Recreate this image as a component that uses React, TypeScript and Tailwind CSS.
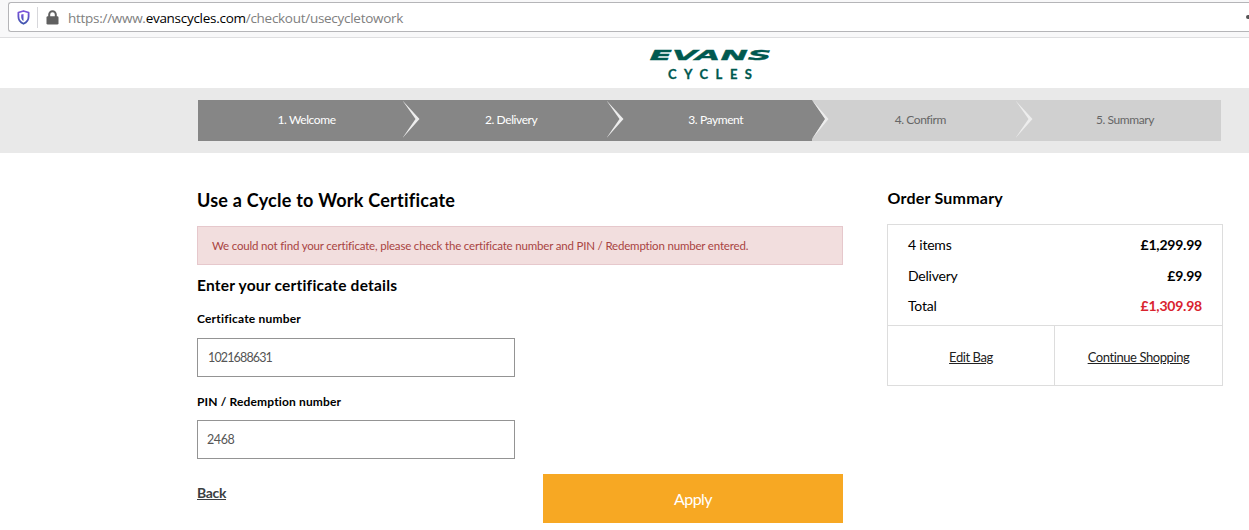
import type { ReactNode } from "react";

function Arrow({ fill }: { fill?: string }) {
  return (
    <svg className="block h-[41px] w-[18px] shrink-0" viewBox="0 0 18 41">
      {fill && <path d="M0 0L13.500 19L0 39Z" fill={fill} />}
      <path d={fill ? "M0 0L16.500 19L0 39L13 19Z" : "M-0.500 0.500L16.500 19L-0.500 38L12.500 19Z"} fill="#ededed" />
    </svg>
  );
}

function Step({ label, done, arrow, fill }: { label: string; done?: boolean; arrow?: boolean; fill?: string }) {
  return (
    <li
      className={
        done
          ? "flex h-[41px] flex-1 items-center bg-[#868686] text-white"
          : "flex h-[41px] flex-1 items-center bg-[#d0d0d0] text-[#666]"
      }
    >
      <div className="w-[18px] shrink-0">{arrow && <Arrow fill={fill} />}</div>
      <span className="flex-1 pr-[5.5px] pb-px text-center text-[12px] tracking-[-0.42px]">{label}</span>
    </li>
  );
}

function Row({ label, value }: { label: string; value: ReactNode }) {
  return (
    <div className="flex h-[30.5px] items-center justify-between text-[14px] tracking-[-0.22px] text-black">
      <span>{label}</span>
      {value}
    </div>
  );
}

export default function App() {
  return (
    <div className="h-[530px] w-[1249px] overflow-hidden bg-white font-[Lato,sans-serif] text-black">
      <header className="flex h-[38px] items-start border-b border-[#dedee0] bg-[#f8f8f9] pt-[2px] pl-2">
        <div className="flex h-[30px] flex-1 items-center rounded-l-[3px] border border-r-0 border-[#b5b5b8] bg-white">
          <svg className="ml-2 h-[15px] w-[13px]" viewBox="0 0 13 15">
            <defs>
              <linearGradient id="shield" x1="0" y1="0" x2="0" y2="1">
                <stop offset="0" stopColor="#7c52dc" />
                <stop offset="1" stopColor="#3f55ad" />
              </linearGradient>
            </defs>
            <path d="M6.5 1L11.6 2.5V6.5C11.6 10 9.7 12.4 6.5 13.8C3.300 12.400 1.400 10 1.400 6.500V2.500Z" fill="none" stroke="url(#shield)" strokeWidth="1.800" strokeLinejoin="round" />
            <path d="M6.500 4V11C4.900 10 4.200 8.500 4.200 6.500V4.600Z" fill="url(#shield)" />
          </svg>
          <span className="ml-[7px] h-[21px] w-px bg-[#d7d7db]" />
          <svg className="ml-2 h-[15px] w-[13px]" viewBox="0 0 13 15">
            <path d="M3.200 7V4.600a3.300 3.300 0 0 1 6.600 0V7" fill="none" stroke="#606060" strokeWidth="2" />
            <rect x="0.500" y="6.200" width="12" height="8.300" rx="1.300" fill="#606060" />
          </svg>
          <span className="ml-[9px] flex-1 pt-[2px] font-['Open_Sans',sans-serif] text-[13.5px] tracking-[-0.28px] whitespace-nowrap text-[#808080]">
            https://www.<span className="text-black">evanscycles.com</span>/checkout/usecycletowork
          </span>
          <span className="h-1 w-[3px] rounded-l-full bg-[#555]" />
        </div>
      </header>

      <div className="flex h-[50px] justify-center pl-[171px]">
        <svg className="h-[50px] w-[130px]" viewBox="0 0 130 50">
          <text x="4.500" y="22" textLength="122" lengthAdjust="spacingAndGlyphs" stroke="#00594f" strokeWidth="0.300" className="fill-[#00594f] font-['DejaVu_Sans',sans-serif] text-[14px] font-bold italic">EVANS</text>
          <text x="23" y="41" textLength="84" lengthAdjust="spacing" stroke="#00594f" strokeWidth="0.300" className="fill-[#00594f] font-[Lato,sans-serif] text-[13px] font-bold">CYCLES</text>
        </svg>
      </div>

      <nav className="h-[65px] bg-[#e9e9e9] pt-3 pr-7 pl-[198px]">
        <ol className="flex">
          <Step label="1. Welcome" done />
          <Step label="2. Delivery" done arrow />
          <Step label="3. Payment" done arrow />
          <Step label="4. Confirm" arrow fill="#868686" />
          <Step label="5. Summary" arrow />
        </ol>
      </nav>

      <div className="flex pl-[197px]">
        <main className="w-[646px]">
          <h1 className="mt-[34px] h-[26px] text-[18px] leading-[26px] font-bold tracking-[0.24px] whitespace-nowrap">Use a Cycle to Work Certificate</h1>
          <div className="mt-[13px] flex h-[39px] items-center border border-[#e6c8cc] bg-[#f2dede] pl-[14px] text-[11.5px] tracking-[-0.18px] whitespace-nowrap text-[#a94442]">
            <span>We could not find your certificate, please check the certificate number and PIN / Redemption number entered.</span>
          </div>
          <h2 className="mt-[9px] h-[22px] text-[15.5px] leading-[22px] font-bold tracking-[0.22px]">Enter your certificate details</h2>
          <label className="mt-[14px] block h-[18px] text-[12px] leading-[18px] font-bold tracking-[0.2px]">Certificate number</label>
          <div className="mt-[10px] flex h-[39px] w-[318px] items-center border border-[#949494] pt-px pl-[10px] text-[12.5px] tracking-[-0.85px] text-[#555]">
            <span>1021688631</span>
          </div>
          <label className="mt-[16px] block h-[18px] text-[12px] leading-[18px] font-bold tracking-[0.15px]">PIN / Redemption number</label>
          <div className="mt-[9px] flex h-[39px] w-[318px] items-center border border-[#949494] pt-px pl-[9px] text-[12.5px] tracking-[-0.4px] text-[#555]">
            <span>2468</span>
          </div>
          <div className="mt-[15px] flex items-start justify-between">
            <a className="mt-[9px] text-[14px] leading-5 font-bold tracking-[-0.35px] text-[#3b3f42] underline">Back</a>
            <button className="h-[49px] w-[300px] bg-[#f7a823] text-[16px] tracking-[-0.6px] text-white">Apply</button>
          </div>
        </main>

        <aside className="ml-[44px] w-[336px]">
          <h2 className="mt-[32px] h-[26px] pl-[0.5px] text-[16px] leading-[26px] font-bold tracking-[0.22px]">Order Summary</h2>
          <div className="mt-[13px] h-[162px] border border-[#ddd]">
            <div className="h-[101px] border-b border-[#ddd] pt-[4.5px] pr-5 pl-5">
              <Row label="4 items" value={<b>£1,299.99</b>} />
              <Row label="Delivery" value={<b>£9.99</b>} />
              <Row label="Total" value={<b className="text-[#d9232e]">£1,309.98</b>} />
            </div>
            <div className="flex h-[59px] text-[13px] tracking-[-0.42px] text-[#222]">
              <div className="flex w-[167px] items-center justify-center border-r border-[#ddd] pt-1"><a className="underline">Edit Bag</a></div>
              <div className="flex flex-1 items-center justify-center pt-1"><a className="underline">Continue Shopping</a></div>
            </div>
          </div>
        </aside>
      </div>
    </div>
  );
}
